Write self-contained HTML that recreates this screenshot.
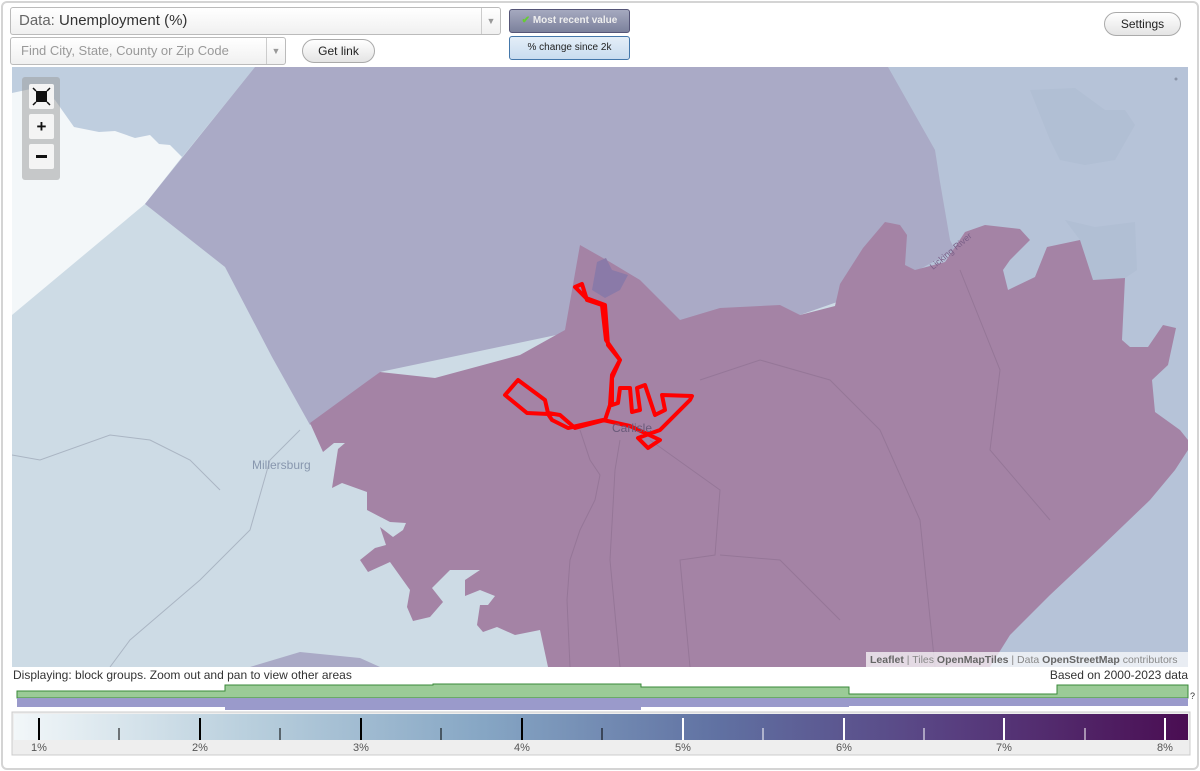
<!DOCTYPE html>
<html><head><style>
body{margin:0;width:1200px;height:771px;background:#fff;font-family:"Liberation Sans",sans-serif;position:relative;overflow:hidden}
.frame{position:absolute;left:1px;top:1px;width:1194px;height:765px;border:2px solid #d4d4d4;border-radius:6px;background:#fff}
.sel{position:absolute;border:1px solid #bbb;border-radius:3px;background:linear-gradient(#fff,#f0f0f0);font-size:15px;color:#333}
.btn{position:absolute;border:1px solid #aaa;border-radius:12px;background:linear-gradient(#fff,#e4e4e4);font-size:12px;color:#222;text-align:center}
</style></head><body>
<div class="frame"></div>
<div class="sel" style="left:10px;top:7px;width:489px;height:26px;line-height:26px"><span style="padding-left:8px;color:#666">Data:</span> Unemployment (%)<div style="position:absolute;right:0;top:0;width:18px;height:26px;border-left:1px solid #ccc;color:#999;font-size:9px;text-align:center">▼</div></div>
<div class="sel" style="left:10px;top:37px;width:274px;height:26px;line-height:26px;font-size:13px;color:#999"><span style="padding-left:10px">Find City, State, County or Zip Code</span><div style="position:absolute;right:0;top:0;width:18px;height:26px;border-left:1px solid #ccc;color:#999;font-size:9px;text-align:center">▼</div></div>
<div class="btn" style="left:302px;top:39px;width:71px;height:22px;line-height:22px">Get link</div>
<div style="position:absolute;left:509px;top:9px;width:119px;height:22px;border:1px solid #557;border-radius:3px;background:linear-gradient(#a5a9bf,#7c819c);color:#eee;font-size:10px;font-weight:bold;line-height:22px;text-align:center"><span style="color:#6c3">✔</span> Most recent value</div>
<div style="position:absolute;left:509px;top:36px;width:119px;height:22px;border:1px solid #47a;border-radius:3px;background:linear-gradient(#e4eef8,#c9dcef);color:#222;font-size:10px;line-height:22px;text-align:center">% change since 2k</div>
<div class="btn" style="left:1104px;top:12px;width:75px;height:22px;line-height:22px">Settings</div>

<svg style="position:absolute;left:0;top:0" width="1200" height="771">
<defs><clipPath id="m"><rect x="12" y="67" width="1176" height="600"/></clipPath>
<linearGradient id="g" x1="0" x2="1"><stop offset="0" stop-color="#f2f7f9"/><stop offset=".2" stop-color="#b9cfdd"/><stop offset=".4" stop-color="#86a6c4"/><stop offset=".6" stop-color="#6071a2"/><stop offset=".8" stop-color="#583f80"/><stop offset="1" stop-color="#4a0d52"/></linearGradient></defs>
<g clip-path="url(#m)">
<rect x="12" y="67" width="1176" height="600" fill="#cddbe5"/>
<polygon points="12,67 255,67 182,157 145,204 12,160" fill="#bfcedf"/>
<polygon points="12,93 40,87 55,100 62,110 74,127 99,132 115,131 135,138 150,135 159,144 170,145 182,157 145,204 12,315" fill="#f3f7f9"/>
<polygon points="888,67 1188,67 1188,667 880,667" fill="#b6c3d8"/>
<polygon points="1030,90 1075,88 1105,110 1125,110 1135,125 1115,160 1085,165 1060,160 1050,140" fill="#b1bfd4"/>
<polygon points="1065,220 1095,227 1135,222 1137,270 1125,278 1093,280 1080,240" fill="#b1bfd4"/>
<polygon points="255,67 888,67 935,150 940,182 950,240 955,250 900,280 800,315 580,330 380,372 310,425 272,357 225,267 145,204" fill="#aaaac6"/>
<polygon points="250,667 300,652 360,658 380,667" fill="#aaaac6"/>
<polygon points="310,423 380,372 435,378 520,355 565,330 580,245 610,262 640,280 680,320 720,308 780,305 800,315 835,306 840,284 863,248 885,222 900,225 907,235 905,265 915,270 945,262 965,232 985,225 1020,229 1030,240 1010,260 1003,270 1008,290 1035,277 1047,247 1080,240 1093,280 1125,278 1122,340 1130,347 1148,347 1163,325 1176,328 1168,365 1152,380 1155,412 1180,430 1188,440 1188,450 1175,470 1150,500 1100,548 1050,595 1010,635 990,667 548,667 540,630 515,635 497,627 483,632 477,625 480,605 488,605 495,596 480,590 465,596 465,580 480,570 450,570 432,588 443,602 430,617 413,621 407,607 410,590 390,562 368,572 360,560 375,548 386,545 380,527 393,537 403,530 406,523 390,522 367,510 367,492 342,483 332,488 338,449 345,443 334,443 323,452" fill="#a483a5"/>
<polygon points="597,262 606,258 612,270 628,275 620,290 605,298 592,290" fill="#8a7aa8"/>
<g fill="none" stroke="#8c6f8f" stroke-width="1" opacity=".6">
<path d="M580,430 L590,460 600,475 595,500 580,530 570,560 567,600 570,667"/><path d="M620,440 L615,470 610,560 620,667"/><path d="M650,440 L720,490 715,555 680,560 690,667"/><path d="M700,380 L760,360 830,380 880,430 920,520 935,667"/><path d="M720,555 L780,560 840,620"/><path d="M960,270 L1000,370 990,450 1050,520"/>
</g>
<g fill="none" stroke="#aab5c3" stroke-width="1">
<path d="M300,430 L270,460 250,530 200,580 130,640 110,667"/><path d="M12,455 L40,460 110,435 150,440 190,460 220,490"/>
</g>
<path d="M575,287 L582,284 587,300 602,305 606,340 620,360 612,375 610,405 605,420 575,428 560,415 548,413 545,400 518,380 505,395 527,413 548,414 552,420 568,428 603,420 630,426 660,440 648,448 638,438 660,430 690,400 692,396 662,395 665,410 655,415 645,385 637,388 640,410 632,412 630,388 620,388 618,403 612,405 612,378 620,360 608,345 605,305 586,298 Z" fill="none" stroke="#f00" stroke-width="4" stroke-linejoin="round"/>
<text x="612" y="432" font-size="12" fill="#6a5a7a">Carlisle</text>
<text x="252" y="469" font-size="12" fill="#8897ae">Millersburg</text>
<g transform="translate(933,270) rotate(-40)"><text font-size="9" fill="#7a6088">Licking River</text></g>
<rect x="22" y="77" width="38" height="103" rx="3" fill="#999" opacity=".5"/>
<rect x="29" y="84" width="25" height="25" rx="2" fill="#f4f4f4"/><rect x="36" y="91" width="11" height="11" fill="#111"/>
<path d="M33,88l3,3M50,88l-3,3M33,105l3,-3M50,105l-3,-3" stroke="#111" stroke-width="1.5"/>
<rect x="29" y="114" width="25" height="25" rx="2" fill="#f4f4f4"/><text x="41.5" y="132" font-size="17" font-weight="bold" text-anchor="middle" fill="#111">+</text>
<rect x="29" y="144" width="25" height="25" rx="2" fill="#f4f4f4"/><rect x="36" y="155" width="11" height="3" fill="#111"/>
<circle cx="1176" cy="79" r="1.5" fill="#8a94a8"/>
<rect x="866" y="652" width="322" height="15" fill="#fff" opacity=".7"/>
<text x="870" y="663" font-size="10.5" fill="#888"><tspan font-weight="bold" fill="#666">Leaflet</tspan> | Tiles <tspan font-weight="bold" fill="#666">OpenMapTiles</tspan> | Data <tspan font-weight="bold" fill="#666">OpenStreetMap</tspan> contributors</text>
</g>
<text x="13" y="679" font-size="12" fill="#333">Displaying: block groups. Zoom out and pan to view other areas</text>
<text x="1188" y="679" font-size="12" fill="#333" text-anchor="end">Based on 2000-2023 data</text>
<path d="M17,698 V691 H225 V685 H433 V684 H641 V687 H849 V694 H1057 V685 H1188 V698 Z" fill="#9bcb97" stroke="#3a8a3a" stroke-width="1"/>
<path d="M17,698 H1188 V706 H849 V707 H641 V710 H225 V707 H17 Z" fill="#9a9acb"/>
<text x="1190" y="699" font-size="9" fill="#333">?</text>
<rect x="12" y="712" width="1178" height="43" fill="#eee" stroke="#ccc"/>
<rect x="14" y="714" width="1174" height="26" fill="url(#g)"/>
<g stroke="#000" stroke-width="2"><path d="M39,718V740M200,718V740M361,718V740M522,718V740"/></g>
<g stroke="#000" stroke-width="1"><path d="M119,728V740M280,728V740M441,728V740M602,728V740"/></g>
<g stroke="#fff" stroke-width="2"><path d="M683,718V740M844,718V740M1004,718V740M1165,718V740"/></g>
<g stroke="#fff" stroke-width="1"><path d="M763,728V740M924,728V740M1085,728V740"/></g>
<g font-size="11" fill="#555" text-anchor="middle"><text x="39" y="751">1%</text><text x="200" y="751">2%</text><text x="361" y="751">3%</text><text x="522" y="751">4%</text><text x="683" y="751">5%</text><text x="844" y="751">6%</text><text x="1004" y="751">7%</text><text x="1165" y="751">8%</text></g>
</svg>
</body></html>
